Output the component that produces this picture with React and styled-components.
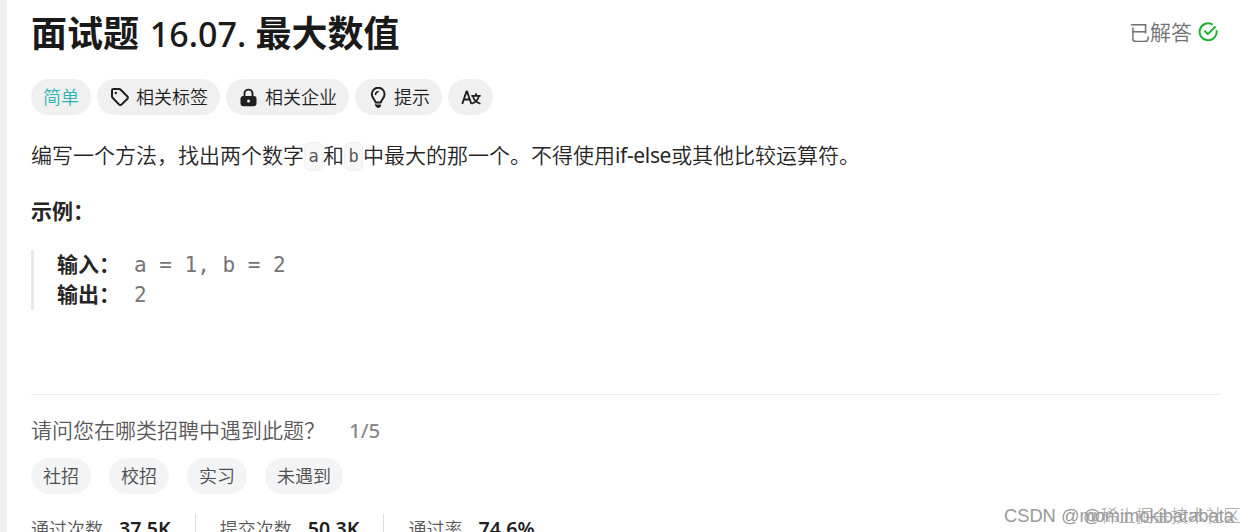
import React from 'react'
import styled, { createGlobalStyle } from 'styled-components';

const GlobalStyle = createGlobalStyle`
  * {
    box-sizing: border-box;
  }
  body {
    margin: 0;
    background: #fff;
    overflow: hidden;
    font-family: "Noto Sans", "Noto Sans CJK SC", sans-serif;
    color: #262626;
  }
`;

const Page = styled.div`
  position: relative;
  height: 532px;
  overflow: hidden;
  border-left: 7px solid #f0f0f0;
  padding: 10px 28px 0 24px;
`;

const Header = styled.header`
  display: flex;
  justify-content: space-between;
  height: 48px;
`;

const Title = styled.h1`
  margin: 0;
  font-size: 36px;
  line-height: 48px;
  font-weight: 700;
  color: #1a1a1a;
  white-space: pre;
`;

const TitleNumber = styled.span`
  display: inline-block;
  width: 116.5px;
  padding-left: 2px;
  font-size: 34px;
  line-height: 46px;
  font-weight: 500;
`;

const Solved = styled.div`
  display: flex;
  align-items: center;
  gap: 6px;
  height: 44px;
  margin-right: 1px;
  font-size: 21px;
  line-height: 30px;
  font-weight: 350;
  color: #737373;
`;

const SolvedText = styled.span`
  margin-bottom: 1px;
`;

const PillRow = styled.div`
  display: flex;
  gap: ${({ $gap }) => $gap}px;
  margin-top: ${({ $top }) => $top}px;
`;

const Pill = styled.button`
  display: flex;
  align-items: center;
  gap: 6px;
  height: 36px;
  padding: 0 12px;
  border: 0;
  border-radius: 18px;
  background: ${({ $bg = '#f0f0f0' }) => $bg};
  color: ${({ $color = '#1f1f1f' }) => $color};
  font-family: inherit;
  font-size: 18px;
  font-weight: 350;
  line-height: 36px;
  white-space: nowrap;
`;

const Text = styled.p`
  display: flex;
  height: 30px;
  margin: 25px 0 0;
  font-size: 21px;
  line-height: 30px;
  font-weight: 350;
  white-space: nowrap;
`;

const Latin = styled.span`
  font-weight: 400;
  letter-spacing: -0.35px;
`;

const Code = styled.code`
  width: 19px;
  height: 29px;
  margin-top: 2px;
  border: 1px solid #f0f0f0;
  border-radius: 6px;
  background: #f7f7f7;
  color: #595959;
  font: 17px/27px "DejaVu Sans Mono", monospace;
  text-align: center;
`;

const Label = styled.p`
  margin: 26px 0 0;
  font-size: 21px;
  line-height: 30px;
  font-weight: 700;
`;

const Example = styled.pre`
  margin: 24px 0 0;
  height: 60px;
  padding-left: 23px;
  border-left: 3px solid #e8e8e8;
  font: 21px/30px "DejaVu Sans Mono", "Noto Sans CJK SC", monospace;
  color: #757575;
`;

const ExampleLine = styled.div`
  display: flex;
  height: 30px;
`;

const ExampleLabel = styled.b`
  width: 77px;
  font-family: "Noto Sans CJK SC", sans-serif;
  line-height: 27px;
  color: #262626;
`;

const Survey = styled.section`
  margin-top: 84px;
  border-top: 1px solid #ededed;
`;

const Question = styled.div`
  display: flex;
  height: 30px;
  margin-top: 20px;
  font-size: 21px;
  line-height: 30px;
  font-weight: 350;
  color: #595959;
`;

const Progress = styled.span`
  margin-left: 24px;
  font-size: 20.5px;
  font-weight: 500;
  color: #8a8a8a;
`;

const Stats = styled.div`
  display: flex;
  align-items: center;
  margin-top: 20px;
  height: 30px;
  font-size: 18px;
  line-height: 30px;
  font-weight: 350;
  color: #595959;
`;

const Stat = styled.div`
  display: flex;
  gap: 16px;
  white-space: nowrap;

  & + & {
    margin-left: 24px;
    padding-left: 24px;
    border-left: 1px solid #dedede;
  }
`;

const StatValue = styled.span`
  font-size: 19.6px;
  font-weight: 600;
  color: #1f1f1f;
`;

const Watermark = styled.div`
  position: absolute;
  top: 504px;
  left: ${({ $left }) => $left}px;
  font: 300 ${({ $size }) => $size}px/24px "Liberation Sans", "Noto Sans CJK SC", sans-serif;
  color: ${({ $color }) => $color};
  white-space: nowrap;
`;

const strokeProps = {
  fill: 'none',
  stroke: 'currentColor',
  strokeWidth: 2,
  strokeLinecap: 'round',
  strokeLinejoin: 'round',
};

const TagIcon = () => (
  <svg width="21" height="21" viewBox="0 0 21 21" {...strokeProps}>
    <path d="M3 3.500v5.700c0 .6.2 1.100.6 1.500l6.600 6.900a1.600 1.600 0 0 0 2.300 0l5.900-5.800a1.600 1.600 0 0 0 0-2.300l-6.700-6.800c-.4-.4-.9-.6-1.500-.6H4.400C3.600 2.100 3 2.700 3 3.500Z" />
    <circle cx="6.800" cy="6" r="1.200" fill="currentColor" stroke="none" />
  </svg>
);

const LockIcon = () => (
  <svg width="21" height="21" viewBox="0 0 21 21">
    <path d="M6.500 9V6.600a4 4 0 0 1 8 0V9" fill="none" stroke="currentColor" strokeWidth="1.900" />
    <rect x="2.500" y="9" width="16" height="10.200" rx="3" fill="currentColor" />
    <circle cx="10.500" cy="14" r="1.500" fill="#f0f0f0" />
  </svg>
);

const BulbIcon = () => (
  <svg width="21" height="21" viewBox="0 0 21 21" {...strokeProps}>
    <path d="M8.600 15.500c0-2.300-3.800-4-3.800-8.200a6.400 6.600 0 0 1 12.800 0c0 4.200-3.800 5.900-3.800 8.200Z" />
    <path d="M8.500 7.400a3 3 0 0 1 2.700-2.700" strokeWidth="1.600" />
    <path d="M8.600 18h5.200c-.4 1.700-1.300 2.500-2.600 2.500S9 19.700 8.600 18Z" fill="currentColor" strokeWidth="1" />
  </svg>
);

const TranslateIcon = () => (
  <svg width="21" height="21" viewBox="0 0 21 21" {...strokeProps} strokeWidth="1.900">
    <path d="M2.500 16.200 6.500 4.500h.6l4 11.700M4 12.500h5.500" />
    <path d="M12 8.800h8M16 6.800v2M13 9.500c.8 3.400 3 5.700 6.800 7M18.800 9.500c-.9 3.400-3 5.700-6.600 7" strokeWidth="1.700" />
  </svg>
);

const SolvedIcon = () => (
  <svg width="21" height="21" viewBox="0 0 21 21" {...strokeProps} stroke="#1cb12f" strokeLinecap="butt">
    <path d="M18.500 8.200A8.500 8.500 0 1 1 14.700 2.600" />
    <path d="m6.500 8.800 3.300 3.300 7.700-7.600" />
  </svg>
);

const tags = [
  { text: '简单', color: '#2db5b5' },
  { text: '相关标签', Icon: TagIcon },
  { text: '相关企业', Icon: LockIcon },
  { text: '提示', Icon: BulbIcon },
  { Icon: TranslateIcon },
];

const answers = ['社招', '校招', '实习', '未遇到'];

const stats = [
  ['通过次数', '37.5K'],
  ['提交次数', '50.3K'],
  ['通过率', '74.6%'],
];

const tag = ({ text, color, Icon }, i) => <Pill key={`tag-${i}`} $color={color}>
                                            {Icon && <Icon />}{text}
                                          </Pill>;

const App = () => (
  <Page>
    <GlobalStyle />
    <Header>
      <Title>面试题<TitleNumber> 16.07. </TitleNumber>最大数值</Title>
      <Solved><SolvedText>已解答</SolvedText><SolvedIcon /></Solved>
    </Header>
    <PillRow $gap={6} $top={21}>{tags.map(tag)}</PillRow>
    <Text>
      编写一个方法，找出两个数字<Code>a</Code>和<Code>b</Code>中最大的那一个。不得使用<Latin>if-else</Latin>或其他比较运算符。
    </Text>
    <Label>示例：</Label>
    <Example>
      <ExampleLine><ExampleLabel>输入：</ExampleLabel>a = 1, b = 2</ExampleLine>
      <ExampleLine><ExampleLabel>输出：</ExampleLabel>2</ExampleLine>
    </Example>
    <Survey>
      <Question>请问您在哪类招聘中遇到此题？<Progress>1/5</Progress></Question>
      <PillRow $gap={18} $top={13}>
        {answers.map(a => <Pill key={a} $bg="#f2f4f5" $color="#4d4d4d">{a}</Pill>)}
      </PillRow>
    </Survey>
    <Stats>
      {stats.map(([name, value]) => (
        <Stat key={name}>{name}<StatValue>{value}</StatValue></Stat>
      ))}
    </Stats>
    <Watermark $left={997} $size={18.3} $color="#999">CSDN @momimokibatabata</Watermark>
    <Watermark $left={1076} $size={17.5} $color="#a0a0a0">@稀土掘金技术社区</Watermark>
  </Page>
)

export default App
